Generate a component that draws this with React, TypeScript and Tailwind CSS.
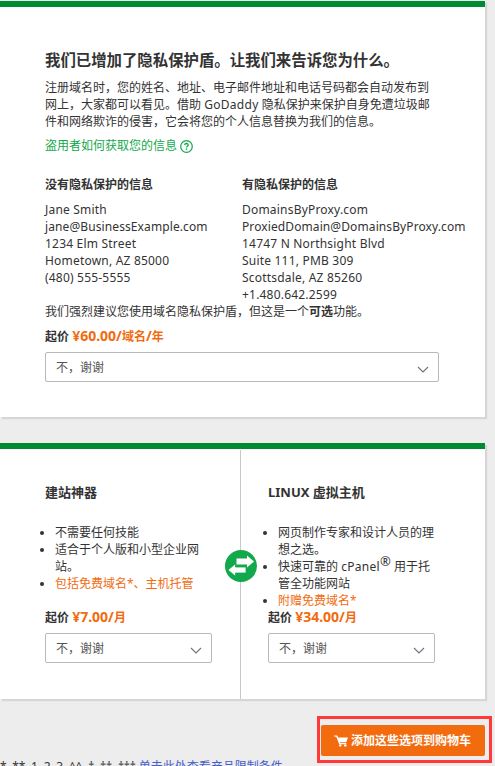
import type { ReactNode } from "react";

function Chevron() {
  return (
    <svg width="12" height="8" viewBox="0 0 12 8" fill="none" stroke="#756f80" strokeWidth="1.1">
      <path d="M1 1 L6 6 L11 1" />
    </svg>
  );
}

function Select({ wide = false }: { wide?: boolean }) {
  return (
    <div
      className={`${wide ? "w-[394px]" : "w-[167px]"} flex h-[30px] items-center justify-between rounded-[2px] border border-[#b9b9b9] bg-white pl-[10px] pr-[9px] text-[#555]`}
    >
      <span>不，谢谢</span>
      <span className="pt-[6px]">
        <Chevron />
      </span>
    </div>
  );
}

function Price({ amount, unit }: { amount: string; unit: ReactNode }) {
  return (
    <div className="h-[17px] font-bold">
      起价{" "}
      <span className="text-[#f26b0f]">
        <span className="text-[14px] leading-[0]">{amount}</span>
        {unit}
      </span>
    </div>
  );
}

function Bullet({ children }: { children: ReactNode }) {
  return (
    <li className="flex">
      <span className="ml-[-5px] mr-[11px] mt-[7px] size-1 shrink-0 rounded-full bg-[#333]" />
      <div>{children}</div>
    </li>
  );
}

const exposed = ["Jane Smith", "jane@BusinessExample.com", "1234 Elm Street", "Hometown, AZ 85000", "(480) 555-5555"];
const hidden = [
  "DomainsByProxy.com",
  "ProxiedDomain@DomainsByProxy.com",
  "14747 N Northsight Blvd",
  "Suite 111, PMB 309",
  "Scottsdale, AZ 85260",
  "+1.480.642.2599",
];

function Line({ text }: { text: string }) {
  return <div className={text.includes("@") ? "tracking-[0.1px]" : "tracking-[0.2px]"}>{text}</div>;
}

export default function App() {
  return (
    <div className="h-[766px] w-[495px] overflow-hidden whitespace-nowrap bg-[#ededed] pt-px font-['Noto_Sans','Noto_Sans_CJK_SC',sans-serif] text-[12px] leading-[17px] text-[#333]">
      <section className="h-[416px] w-[485px] border-t-[6px] border-[#008a32] bg-white pl-[45px] pt-[42px] shadow-[2px_2px_1px_#d6d6d6]">
        <h1 className="h-[24px] text-[15.4px] font-bold leading-[24px]">我们已增加了隐私保护盾。让我们来告诉您为什么。</h1>
        <p className="mt-[6px]">
          注册域名时，您的姓名、地址、电子邮件地址和电话号码都会自动发布到
          <br />
          网上，大家都可以看见。借助 <span className="tracking-[0.3px]">GoDaddy</span> 隐私保护来保护自身免遭垃圾邮
          <br />
          件和网络欺诈的侵害，它会将您的个人信息替换为我们的信息。
        </p>
        <div className="mt-[7px] flex h-[17px] items-center gap-[3px] text-[#11a94b]">
          <span>盗用者如何获取您的信息</span>
          <svg className="mt-[2px]" width="13" height="13" viewBox="0 0 13 13" fill="none" stroke="currentColor">
            <circle cx="6.5" cy="6.5" r="5.8" strokeWidth="1.2" />
            <path d="M4.7 5.1 C4.8 2.9 8.4 3 8.2 5.1 C8.1 6.2 6.5 6.3 6.5 7.6 M6.5 8.6 V10" strokeWidth="1.3" />
          </svg>
        </div>
        <div className="mt-[22px] flex h-[127px]">
          <div className="w-[197px]">
            <h2 className="mb-[8px] font-bold">没有隐私保护的信息</h2>
            {exposed.map((line) => (
              <Line key={line} text={line} />
            ))}
          </div>
          <div>
            <h2 className="mb-[8px] font-bold">有隐私保护的信息</h2>
            {hidden.map((line) => (
              <Line key={line} text={line} />
            ))}
          </div>
        </div>
        <p className="mb-[8px]">
          我们强烈建议您使用域名隐私保护盾，但这是一个<b>可选</b>功能。
        </p>
        <Price amount="¥60.00/" unit={<>域名<span className="text-[14px] leading-[0]">/</span>年</>} />
        <div className="mt-[7px]">
          <Select wide />
        </div>
      </section>

      <section className="mt-[26px] flex h-[256px] w-[485px] border-t-[6px] border-[#008a32] bg-white shadow-[2px_2px_1px_#d6d6d6]">
        <div className="w-[240px] pl-[45px] pt-[33px]">
          <h2 className="h-[20px] text-[13px] font-bold leading-[20px]">建站神器</h2>
          <ul className="mt-[22px] h-[85px]">
            <Bullet>不需要任何技能</Bullet>
            <Bullet>适合于个人版和小型企业网<br />站。</Bullet>
            <Bullet><span className="text-[#f26b0f]">包括免费域名*、主机托管</span></Bullet>
          </ul>
          <Price amount="¥7.00/" unit="月" />
          <div className="mt-[7px]">
            <Select />
          </div>
        </div>
        <div className="relative mt-px w-px bg-[#c8c8c8]">
          <svg className="absolute left-[-15px] top-[100px]" width="32" height="32" viewBox="0 0 32 32">
            <circle cx="16" cy="16" r="16" fill="#11a94b" />
            <path d="M11.5 8.5 H22 V5.5 L29 11.5 L22 17.5 V14.5 H11.5 Z" fill="white" />
            <path
              d="M21 17 V23 H10.5 V26.3 L3 20 L10.5 13.7 V17 Z"
              fill="white"
              stroke="#11a94b"
              strokeWidth="0.8"
            />
          </svg>
        </div>
        <div className="pl-[27px] pt-[33px]">
          <h2 className="h-[20px] text-[13px] font-bold leading-[20px]">LINUX 虚拟主机</h2>
          <ul className="mt-[22px] h-[85px]">
            <Bullet>网页制作专家和设计人员的理<br />想之选。</Bullet>
            <Bullet>快速可靠的 <span className="tracking-[0.3px]">cPanel</span><span className="relative -top-[5px] text-[13px] leading-[0]">®</span> 用于托<br />管全功能网站</Bullet>
            <Bullet><span className="text-[#f26b0f]">附赠免费域名*</span></Bullet>
          </ul>
          <Price amount="¥34.00/" unit="月" />
          <div className="mt-[7px]">
            <Select />
          </div>
        </div>
      </section>

      <footer className="flex h-[67px] justify-between pr-[3px] pt-[17px]">
        <div className="pt-[42px]">
          <span className="tracking-[-0.2px]">*, **, 1, 2, 3, ^^, †, ††, ††† </span>
          <span className="text-[#4660c8]">单击此处查看产品限制条件</span>
        </div>
        <div className="h-[47px] w-[175px] border-[3px] border-[#ff3838] pl-px pt-[6px]">
          <button className="flex h-[31px] w-[164px] items-center rounded-[2px] bg-[#f26b0f] pl-[13px] font-bold text-white">
            <svg className="mr-[3px]" width="14" height="12" viewBox="0 0 14 12" fill="white">
              <path d="M0 0.5 H3.2 L4.2 2.5 H14 L12.3 7.3 H5.8 L6.1 8 H12.3 V9.2 H5.2 L2.3 1.7 H0.6 Z" />
              <circle cx="6.3" cy="10.4" r="1.2" />
              <circle cx="11.3" cy="10.4" r="1.2" />
            </svg>
            添加这些选项到购物车
          </button>
        </div>
      </footer>
    </div>
  );
}
